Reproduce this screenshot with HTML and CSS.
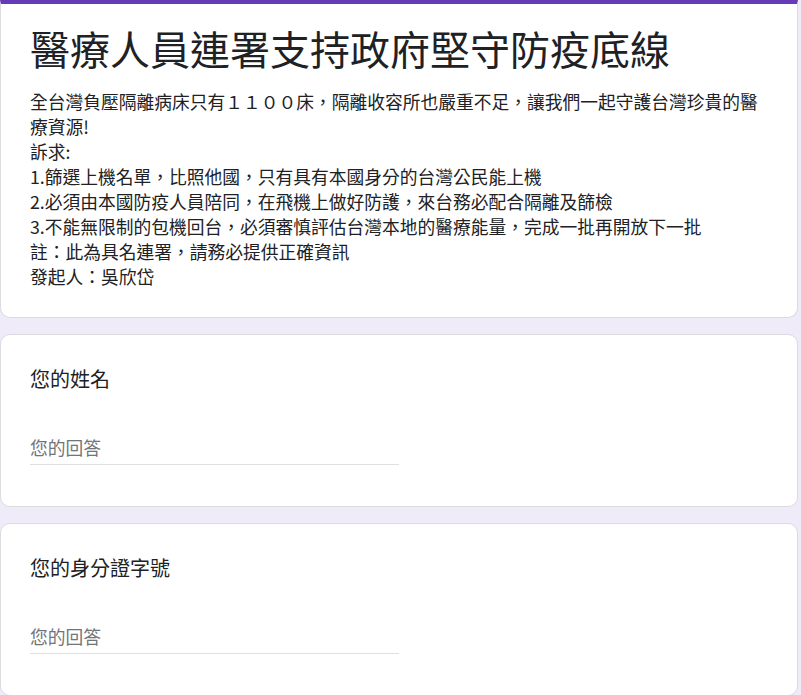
FILE: index.html
```html
<!DOCTYPE html>
<html lang="zh-Hant">
<head>
    <meta charset="utf-8">
    <meta name="viewport" content="width=device-width, initial-scale=1.0">
    <title>醫療人員連署支持政府堅守防疫底線</title>
<link rel="stylesheet" href="styles.css">
</head>
<body>
<div id="wrap">
    <div class="card headCard">
        <h1 class="formTitle">醫療人員連署支持政府堅守防疫底線</h1>
        <div class="formDesc">
            全台灣負壓隔離病床只有１１００床，隔離收容所也嚴重不足，讓我們一起守護台灣珍貴的醫療資源!<br>
            訴求:<br>
            1.篩選上機名單，比照他國，只有具有本國身分的台灣公民能上機<br>
            2.必須由本國防疫人員陪同，在飛機上做好防護，來台務必配合隔離及篩檢<br>
            3.不能無限制的包機回台，必須審慎評估台灣本地的醫療能量，完成一批再開放下一批<br>
            註：此為具名連署，請務必提供正確資訊<br>
            發起人：吳欣岱
        </div>
    </div>
    <div class="card qCard">
        <div class="qTitle">您的姓名</div>
        <div class="answer"><input type="text" class="answerInput" placeholder="您的回答"></div>
    </div>
    <div class="card qCard">
        <div class="qTitle">您的身分證字號</div>
        <div class="answer"><input type="text" class="answerInput" placeholder="您的回答"></div>
    </div>
</div>
</body>
</html>
```
FILE: styles.css
```css
*{padding: 0;margin: 0;box-sizing: border-box;}
body {background-color: #f0ebf8;font-family: "Noto Sans CJK TC", "Noto Sans", sans-serif;color: #202124;}
#wrap {width: 798px;padding-bottom: 40px;}

.card {background-color: #fff;border: 1px solid #dadce0;border-radius: 10px;padding: 0 29px;margin-bottom: 16px;}
.headCard {border-top: 4px solid #673ab7;border-radius: 0 0 10px 10px;padding-top: 19px;padding-bottom: 28px;}
.formTitle {font-size: 40px;line-height: 50px;font-weight: 400;}
.formDesc {margin-top: 16px;font-size: 17.75px;line-height: 25px;}

.qCard {padding-top: 29px;padding-bottom: 41px;}
.qTitle {font-size: 20px;line-height: 30px;}
.answer {margin-top: 34px;width: 369px;border-bottom: 1px solid #e0e0e0;}
.answerInput {display: block;width: 100%;border: 0;outline: 0;background: transparent;padding: 8px 0 6px;font-family: inherit;font-size: 17.75px;line-height: 22px;height: 36px;color: #202124;}
.answerInput::placeholder {color: #70757a;}
```
